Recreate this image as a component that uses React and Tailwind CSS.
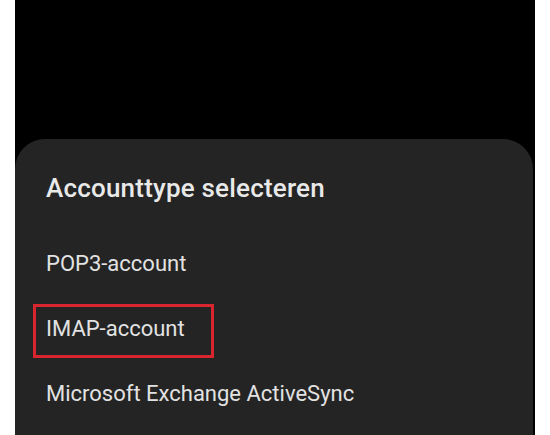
const items = ['POP3-account', 'IMAP-account', 'Microsoft Exchange ActiveSync']

export default function App() {
  return (
    <div className="w-[550px] h-[435px] bg-white px-[15px] overflow-hidden" style={{ fontFamily: 'Roboto, "Noto Sans", sans-serif' }}>
      <div className="h-full bg-black flex flex-col pt-[139px] pr-[2px]">
        <div className="flex-1 bg-[#242424] rounded-t-[30px] pl-[31px] pt-[35px]">
          <h2 className="text-[26px] leading-[28px] font-medium tracking-[0.2px] text-[#e9e9e9]">Accounttype selecteren</h2>
          <ul className="mt-[29px]">
            {items.map((label) => (
              <li key={label} className="relative h-[65px] flex items-center text-[22px] text-[#e2e2e2]">
                {label === 'IMAP-account' && (
                  <span className="absolute left-[-13px] top-[8px] w-[181px] h-[54px] border-[3px] border-[#d9262e]" />
                )}
                <span className="relative">{label}</span>
              </li>
            ))}
          </ul>
        </div>
      </div>
    </div>
  )
}
